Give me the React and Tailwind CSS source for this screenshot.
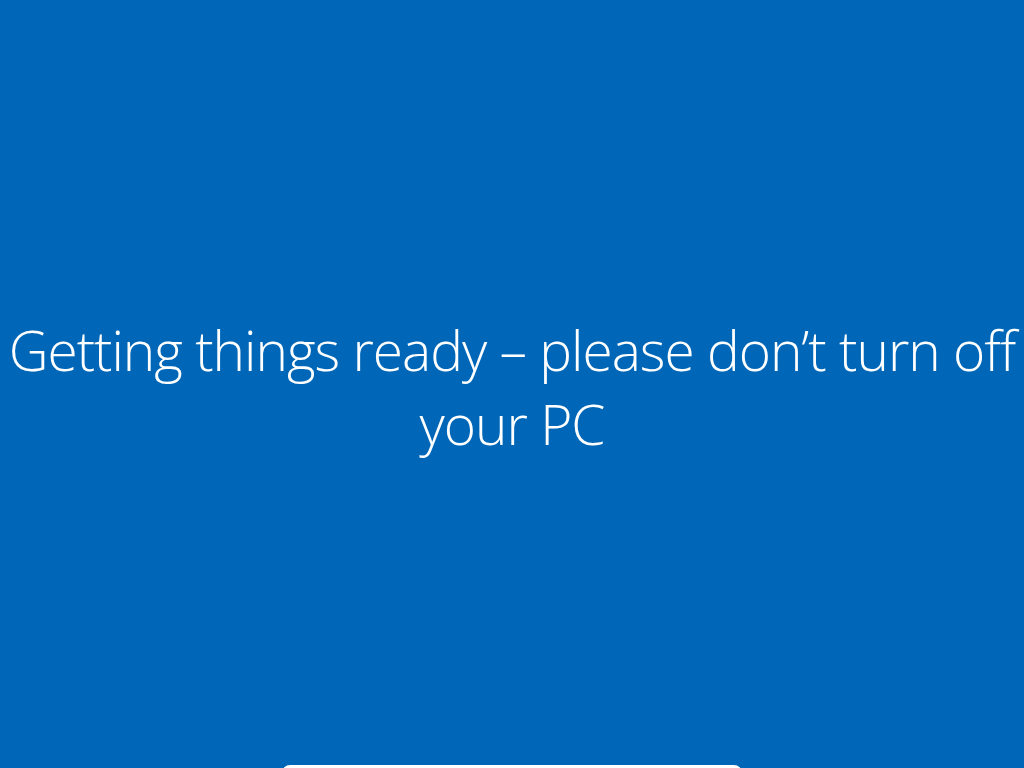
import React from "react";

const App = () => {
  return (
    <section className="w-screen h-[768px] overflow-hidden bg-[#0067b8] flex flex-col">
      {/* message */}
      <div className="flex-1 flex items-center justify-center pt-[8px]">
        <h1
          className="text-center text-white font-light text-[55px] leading-[74px] tracking-[-1px] whitespace-nowrap"
          style={{ fontFamily: '"Open Sans", "Noto Sans", sans-serif' }}
        >
          Getting things ready – please don’t turn off
          <br />
          your PC
        </h1>
      </div>
      {/* bottom panel peeking in */}
      <div className="h-[3px] flex justify-center">
        <div className="w-[460px] h-[20px] bg-white rounded-t-[8px]" />
      </div>
    </section>
  );
};

export default App;
